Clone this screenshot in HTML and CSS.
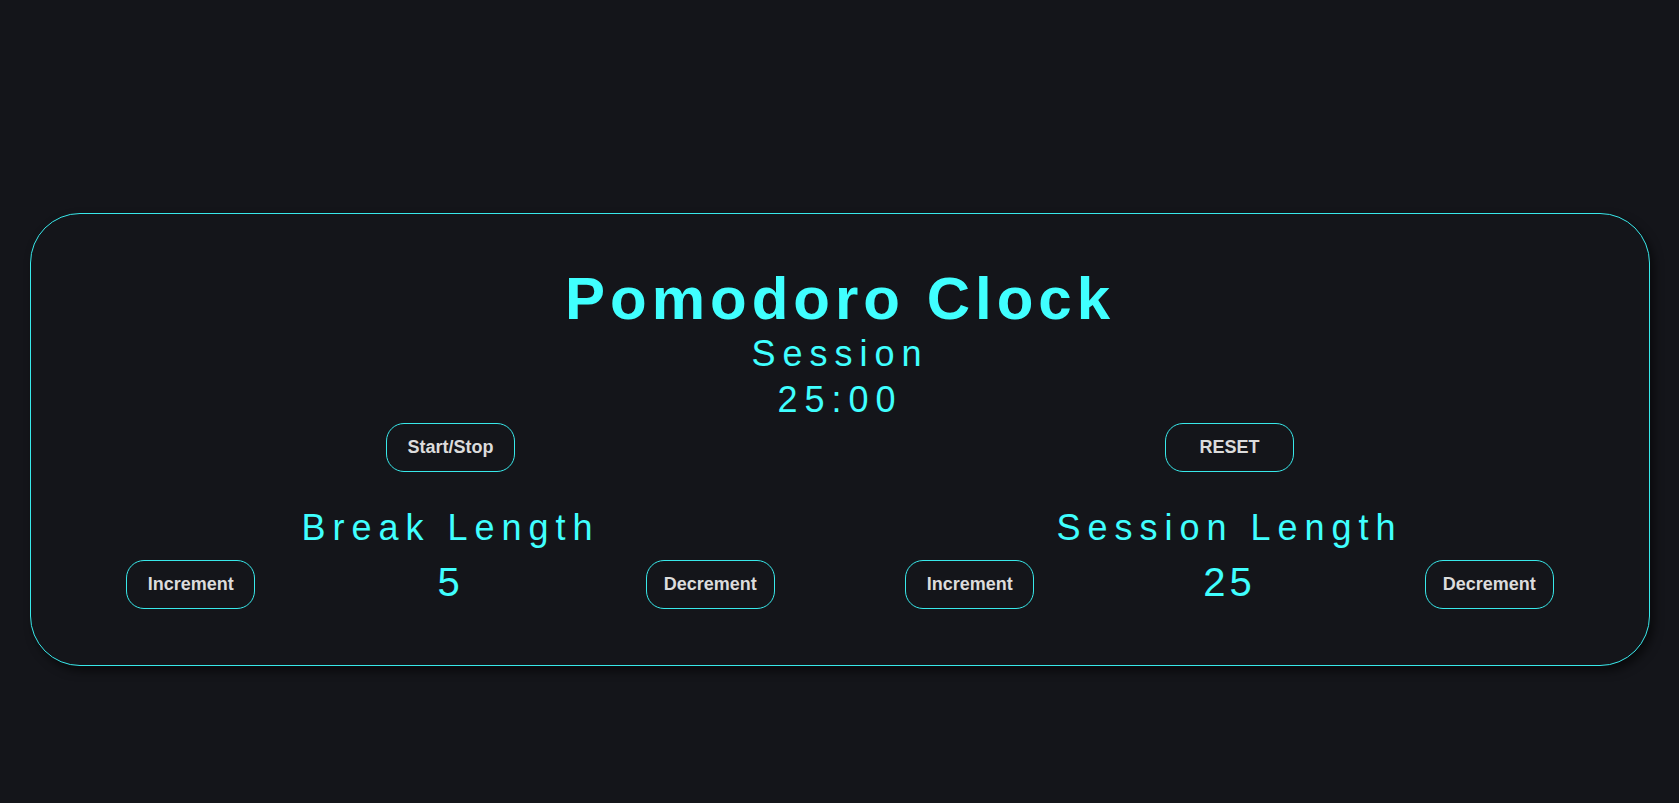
FILE: index.html
```html
<!DOCTYPE html>
<html lang="en">
<head>
<meta charset="utf-8">
<title>Pomodoro Clock</title>
<link rel="stylesheet" href="styles.css">
</head>
<body>
<main class="page">
  <section class="card">
    <h1 class="title">Pomodoro Clock</h1>
    <div class="timer-label">Session</div>
    <div class="time-left">25:00</div>
    <div class="actions">
      <div class="half"><button class="btn">Start/Stop</button></div>
      <div class="half"><button class="btn">RESET</button></div>
    </div>
    <div class="settings">
      <div class="setting">
        <div class="setting-label">Break Length</div>
        <div class="controls">
          <div class="cell"><button class="btn">Increment</button></div>
          <div class="cell"><span class="value">5</span></div>
          <div class="cell"><button class="btn">Decrement</button></div>
        </div>
      </div>
      <div class="setting">
        <div class="setting-label">Session Length</div>
        <div class="controls">
          <div class="cell"><button class="btn">Increment</button></div>
          <div class="cell"><span class="value">25</span></div>
          <div class="cell"><button class="btn">Decrement</button></div>
        </div>
      </div>
    </div>
  </section>
</main>
</body>
</html>
```

FILE: styles.css
```css
html, body {
  margin: 0;
  padding: 0;
  background: #14151a;
  height: 100%;
}

body {
  font-family: "Liberation Sans", Arial, sans-serif;
  color: #40ffff;
}

.page {
  padding: 213px 29px 0 30px;
}

.card {
  box-sizing: border-box;
  height: 453px;
  border: 1px solid #38e8ea;
  border-radius: 50px;
  padding: 54px 30px 0;
  box-shadow: 4px 5px 10px rgba(0, 0, 0, 0.55);
  text-align: center;
}

.title {
  margin: 0;
  font-size: 60px;
  font-weight: bold;
  line-height: 62px;
  letter-spacing: 5px;
}

.timer-label {
  font-size: 36px;
  line-height: 48px;
  letter-spacing: 7px;
}

.time-left {
  font-size: 36px;
  line-height: 44px;
  letter-spacing: 7px;
}

.actions {
  display: flex;
  margin-top: 1px;
}

.half {
  flex: 1;
  display: flex;
  justify-content: center;
}

.btn {
  box-sizing: border-box;
  width: 129px;
  height: 49px;
  border: 1px solid #38e8ea;
  border-radius: 18px;
  background: transparent;
  color: #dcdcdc;
  font-family: "Liberation Sans", Arial, sans-serif;
  font-size: 18px;
  font-weight: bold;
  padding: 0;
  cursor: pointer;
}

.settings {
  display: flex;
  margin-top: 32px;
}

.setting {
  flex: 1;
}

.setting-label {
  font-size: 36px;
  line-height: 48px;
  letter-spacing: 7px;
}

.controls {
  display: flex;
  align-items: center;
  margin-top: 8px;
}

.cell {
  flex: 1;
  display: flex;
  justify-content: center;
  align-items: center;
}

.value {
  font-size: 40px;
  line-height: 49px;
  letter-spacing: 4px;
  position: relative;
  top: -2px;
}
```
